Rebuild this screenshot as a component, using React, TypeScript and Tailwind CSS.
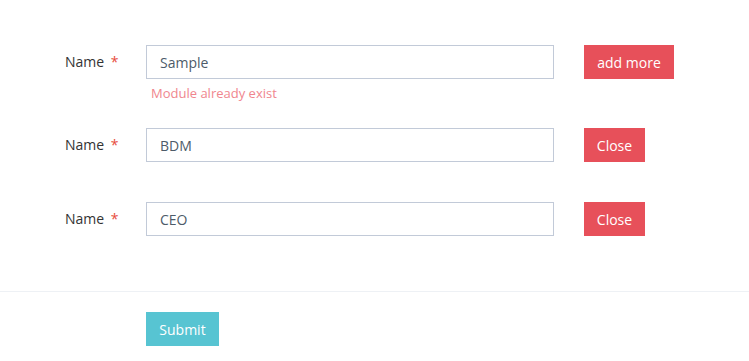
import { useState } from "react";

type Row = { id: number; value: string; error?: string };

const initialRows: Row[] = [
  { id: 1, value: "Sample", error: "Module already exist" },
  { id: 2, value: "BDM" },
  { id: 3, value: "CEO" },
];

export default function App() {
  const [rows, setRows] = useState<Row[]>(initialRows);

  const update = (id: number, value: string) =>
    setRows((r) => r.map((x) => (x.id === id ? { ...x, value } : x)));

  return (
    <div
      className="min-h-[361px] w-[749px] bg-white text-[14px] text-[#333]"
      style={{ fontFamily: '"Open Sans", "Noto Sans", Arial, sans-serif' }}
    >
      <form onSubmit={(e) => e.preventDefault()}>
        <div className="pt-[45px] pb-[55px]">
          {rows.map((row, i) => (
            <div key={row.id} className={i === 0 ? "" : i === 1 ? "mt-[26px]" : "mt-[40px]"}>
              <div className="flex items-center">
                <label className="w-[146px] pl-[65px] leading-[20px]">
                  Name <span className="ml-[3px] text-[#e74c3c]">*</span>
                </label>
                <input
                  value={row.value}
                  onChange={(e) => update(row.id, e.target.value)}
                  className="h-[34px] w-[408px] border border-[#c2cad8] px-[13px] text-[14px] text-[#4d5b69] outline-none"
                />
                {i === 0 ? (
                  <button
                    type="button"
                    className="ml-[30px] h-[34px] w-[90px] bg-[#e7505a] text-[14px] text-white"
                  >
                    add more
                  </button>
                ) : (
                  <button
                    type="button"
                    onClick={() => setRows((r) => r.filter((x) => x.id !== row.id))}
                    className="ml-[30px] h-[34px] w-[61px] bg-[#e7505a] text-[14px] text-white"
                  >
                    Close
                  </button>
                )}
              </div>
              {row.error ? (
                <p className="ml-[151px] mt-[5px] text-[13px] leading-[18px] text-[#f0868e]">
                  {row.error}
                </p>
              ) : null}
            </div>
          ))}
        </div>
        <div className="border-t border-[#eef1f5] pt-[20px]">
          <button
            type="submit"
            className="ml-[146px] h-[34px] w-[73px] bg-[#57c4d2] text-[14px] text-white"
          >
            Submit
          </button>
        </div>
      </form>
    </div>
  );
}
